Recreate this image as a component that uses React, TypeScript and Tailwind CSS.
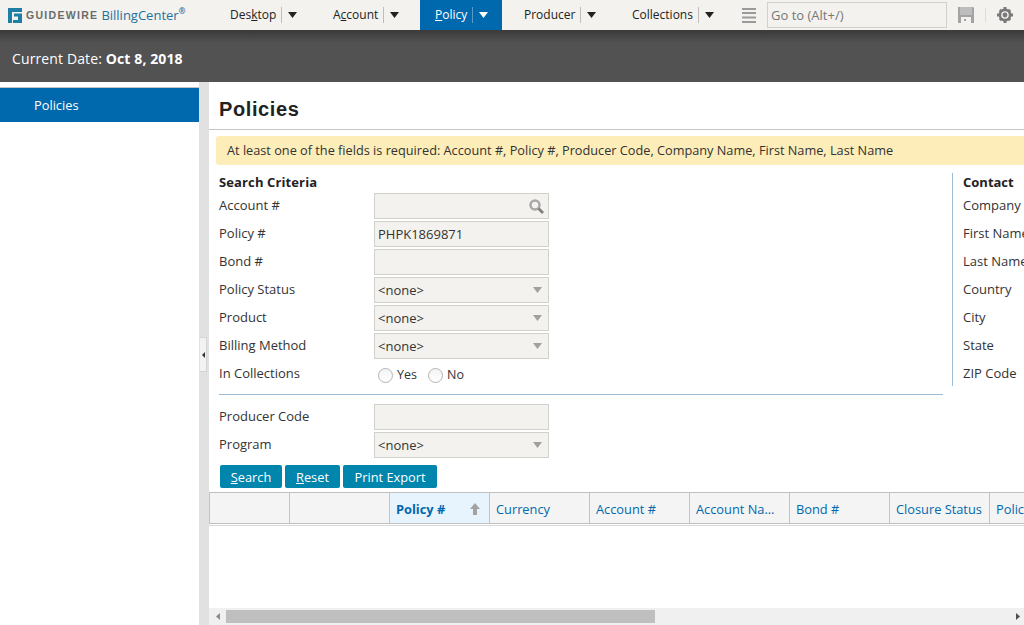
import React from "react";

const FONT = "font-['Open_Sans',sans-serif]";

const Caret = ({ color = "#222" }: { color?: string }) => (
  <svg width="9" height="6" viewBox="0 0 9 6" className="block">
    <path d="M0 0h9L4.5 6z" fill={color} />
  </svg>
);

const NavItem = ({
  label,
  width,
  active,
  ml = "",
}: {
  label: React.ReactNode;
  width: string;
  active?: boolean;
  ml?: string;
}) => (
  <div
    className={`${width} ${ml} h-[30px] pl-[15px] flex items-center text-[12px] ${
      active ? "bg-[#0068ad] text-white" : "text-[#222]"
    }`}
  >
    <span className="whitespace-nowrap">{label}</span>
    <span className={`ml-[5px] w-px h-[16px] ${active ? "bg-[#5b9ac8]" : "bg-[#bdbdb9]"}`} />
    <span className="ml-[6px]">
      <Caret color={active ? "#fff" : "#222"} />
    </span>
  </div>
);

const Logo = () => (
  <svg width="14" height="15" viewBox="0 0 14 15" className="block shrink-0">
    <path d="M0 0h14v4H4v11H0z" fill="#1d7ea6" />
    <path d="M6 5.500h8V15H5v-3h5V8.500H6z" fill="#1d7ea6" />
  </svg>
);

const Field = ({ label, children }: { label: string; children?: React.ReactNode }) => (
  <div className="h-[28px] flex items-center">
    <div className="w-[155px] text-[#333] -mt-[2px]">{label}</div>
    {children}
  </div>
);

const Box = ({ children }: { children?: React.ReactNode }) => (
  <div className="w-[175px] h-[26px] bg-[#f3f2ee] border border-[#d0d0cc] flex items-center justify-between pl-[3px] pr-[6px] text-[#333]">
    {children}
  </div>
);

const Select = () => (
  <Box>
    <span>&lt;none&gt;</span>
    <Caret color="#a0a0a0" />
  </Box>
);

const Radio = ({ label }: { label: string }) => (
  <div className="flex items-center gap-[4px] mr-[12px]">
    <span className="w-[15px] h-[15px] rounded-full border border-[#b4b4b4] bg-gradient-to-b from-[#f4f4f4] to-[#ffffff]" />
    <span className="text-[#333] text-[12.5px]">{label}</span>
  </div>
);

const Btn = ({ width, children }: { width: string; children: React.ReactNode }) => (
  <button className={`${width} h-[23px] rounded-[2px] bg-[#0085ad] text-white text-[12.8px]`}>{children}</button>
);

const columns = ["", "", "Policy #", "Currency", "Account #", "Account Na...", "Bond #", "Closure Status", "Policy"];

export default function App() {
  return (
    <div className={`w-[1024px] h-[625px] overflow-hidden flex flex-col bg-white text-[13px] leading-[18px] ${FONT}`}>
      {/* top bar */}
      <header className="h-[30px] shrink-0 bg-[#f3f2ee] flex items-center">
        <div className="w-[215px] pl-[8px] flex items-center shrink-0">
          <Logo />
          <span className="ml-[4px] text-[10.5px] font-bold tracking-[1.3px] text-[#6b6b6b] font-['Liberation_Sans',sans-serif]">
            GUIDEWIRE
          </span>
          <span className="ml-[3px] text-[#1f719f] text-[13px]">BillingCenter</span>
          <span className="text-[#1f719f] text-[8px] leading-[8px] font-bold -mt-[8px]">®</span>
        </div>
        <NavItem label={<>Des<u>k</u>top</>} width="w-[103px]" />
        <NavItem label={<>A<u>c</u>count</>} width="w-[102px]" />
        <NavItem label={<><u>P</u>olicy</>} width="w-[82px]" active />
        <NavItem label="Producer" width="w-[108px]" ml="ml-[7px]" />
        <NavItem label="Collections" width="w-[110px]" />
        <svg width="14" height="15" viewBox="0 0 14 15" className="block ml-[15px] shrink-0">
          <path d="M0 0h14v2H0zM0 4h14v2H0zM0 8.500h14v2H0zM0 13h14v2H0z" fill="#9a9a9a" />
        </svg>
        <div className="ml-[11px] w-[180px] h-[26px] shrink-0 border border-[#d0d0cc] flex items-center pl-[3px] text-[#777]">
          Go to (Alt+/)
        </div>
        <svg width="16" height="16" viewBox="0 0 16 16" className="block ml-[11px] shrink-0">
          <path d="M0 0h15l1 1v15H0z" fill="#a3a3a3" />
          <path d="M2 0h12v8H2z" fill="#bdbdbd" />
          <path d="M3 10h10v6H3z" fill="#f3f2ee" />
          <path d="M6 12h2v2H6z" fill="#a3a3a3" />
        </svg>
        <span className="ml-[11px] w-px h-[14px] bg-[#dcdcd8] shrink-0" />
        <svg width="16" height="16" viewBox="0 0 16 16" className="block ml-[11px] shrink-0">
          <circle cx="8" cy="8" r="5.100" fill="none" stroke="#7a7a7a" strokeWidth="2.600" />
          <circle cx="8" cy="8" r="2.400" fill="#7a7a7a" />
          <path
            d="M6.500 0h3v3h-3zM6.500 13h3v3h-3zM0 6.500h3v3H0zM13 6.500h3v3h-3zM1.800 3.900l2.100-2.100 2 2-2.100 2.100zM10.100 12.200l2.100-2.100 2 2-2.100 2.100zM12.100 1.800l2.100 2.100-2 2-2.100-2.100zM3.800 10.100l2.100 2.100-2 2-2.100-2.100z"
            fill="#7a7a7a"
          />
        </svg>
      </header>

      {/* date band */}
      <div className="h-[52px] shrink-0 flex items-center pl-[12px] pt-[6px] text-[14px] tracking-[0.12px] text-white bg-gradient-to-b from-[#3a3a3a] from-0% via-[#525252] via-[25%] to-[#525252]">
        <span>
          Current Date: <b>Oct 8, 2018</b>
        </span>
      </div>

      <div className="flex-1 min-h-0 flex">
        {/* sidebar */}
        <aside className="w-[199px] shrink-0 pt-[5px]">
          <div className="border-t border-[#c4c4c4] h-[35px] bg-[#0068ad] text-white flex items-center pl-[34px] text-[12.8px]">
            Policies
          </div>
        </aside>
        <div className="relative w-[10px] shrink-0 bg-[#e1e1e1]">
          <div className="absolute left-[1px] top-[255px] w-[7px] h-[35px] bg-[#f2f2f2] border border-l-0 border-[#d4d4d4] flex items-center justify-center">
            <svg width="3" height="6" viewBox="0 0 3 6" className="block">
              <path d="M3 0v6L0 3z" fill="#333" />
            </svg>
          </div>
        </div>

        {/* main */}
        <main className="flex-1 min-w-0 overflow-hidden flex flex-col">
          <div className="h-[48px] shrink-0 border-b border-[#c4c4c4] flex items-center pl-[10px] pt-[7px]">
            <h1 className="text-[20px] font-bold tracking-[0.6px] text-[#222] font-['Liberation_Sans',sans-serif]">
              Policies
            </h1>
          </div>

          <div className="ml-[7px] mt-[6px] h-[29px] shrink-0 rounded-l-[3px] bg-[#fdedb9] flex items-center pl-[11px] pb-[1px] text-[12.72px] text-[#333] whitespace-nowrap">
            At least one of the fields is required: Account #, Policy #, Producer Code, Company Name, First Name, Last Name
          </div>

          <div className="flex shrink-0 pl-[10px] mt-[8px]">
            <div className="w-[724px] shrink-0">
              <div className="h-[18px] font-bold text-[#222] tracking-[0.12px]">Search Criteria</div>
              <div className="mt-[1px]">
                <Field label="Account #">
                  <Box>
                    <span />
                    <svg width="15" height="15" viewBox="0 0 15 15" className="block -mr-[2px]">
                      <circle cx="6" cy="6" r="4.500" fill="none" stroke="#a8a8a8" strokeWidth="2.500" />
                      <path d="M9.500 9.500L14 14" stroke="#808080" strokeWidth="2.800" />
                    </svg>
                  </Box>
                </Field>
                <Field label="Policy #">
                  <Box>PHPK1869871</Box>
                </Field>
                <Field label="Bond #">
                  <Box />
                </Field>
                <Field label="Policy Status">
                  <Select />
                </Field>
                <Field label="Product">
                  <Select />
                </Field>
                <Field label="Billing Method">
                  <Select />
                </Field>
                <Field label="In Collections">
                  <div className="pl-[4px] pt-[2px] flex items-center">
                    <Radio label="Yes" />
                    <div className="-ml-[1px]">
                      <Radio label="No" />
                    </div>
                  </div>
                </Field>
              </div>
              <div className="mt-[6px] border-t border-[#9dbdd6]" />
              <div className="mt-[8px]">
                <Field label="Producer Code">
                  <Box />
                </Field>
                <Field label="Program">
                  <Select />
                </Field>
              </div>
              <div className="mt-[6px] ml-[1px] flex gap-[3px]">
                <Btn width="w-[62px]">
                  <u>S</u>earch
                </Btn>
                <Btn width="w-[55px]">
                  <u>R</u>eset
                </Btn>
                <Btn width="w-[94px]">Print Export</Btn>
              </div>
            </div>
            <div className="ml-[9px] h-[213px] border-l border-[#9dbdd6] pl-[10px] whitespace-nowrap">
              <div className="h-[18px] font-bold text-[#222]">Contact</div>
              <div className="mt-[1px]">
                {["Company", "First Name", "Last Name", "Country", "City", "State", "ZIP Code"].map((l) => (
                  <div key={l} className="h-[28px] flex items-center text-[#333]">
                    <span className="-mt-[2px]">{l}</span>
                  </div>
                ))}
              </div>
            </div>
          </div>

          {/* results table */}
          <div className="mt-[4px] shrink-0 flex h-[32px] border-y border-[#c0c0c0] bg-[#f4f4f4]">
            {columns.map((c, i) => (
              <div
                key={i}
                className={`${i === 0 ? "w-[81px] border-l" : "w-[100px]"} shrink-0 border-r border-[#c4c4c4] pl-[6px] pt-[1px] flex items-center justify-between pr-[9px] whitespace-nowrap text-[12.8px] text-[#0068ad] ${
                  i === 2 ? "bg-[#e8f4fd] font-bold" : ""
                }`}
              >
                {c}
                {i === 2 && (
                  <svg width="10" height="12" viewBox="0 0 10 12" className="block">
                    <path d="M5 0l5 6H7v6H3V6H0z" fill="#a3a3a3" />
                  </svg>
                )}
              </div>
            ))}
          </div>
          <div className="mt-[1px] border-t border-[#d8d8d8] flex-1" />

          {/* horizontal scrollbar */}
          <div className="h-[17px] shrink-0 bg-[#f0f0f0] flex items-center">
            <div className="w-[17px] flex justify-center shrink-0">
              <svg width="4" height="7" viewBox="0 0 4 7" className="block">
                <path d="M4 0v7L0 3.500z" fill="#8a8a8a" />
              </svg>
            </div>
            <div className="w-[429px] h-[13px] bg-[#bfbfbf] shrink-0" />
            <div className="flex-1 flex justify-end pr-[4px]">
              <svg width="4" height="7" viewBox="0 0 4 7" className="block">
                <path d="M0 0v7l4-3.500z" fill="#505050" />
              </svg>
            </div>
          </div>
        </main>
      </div>
    </div>
  );
}
